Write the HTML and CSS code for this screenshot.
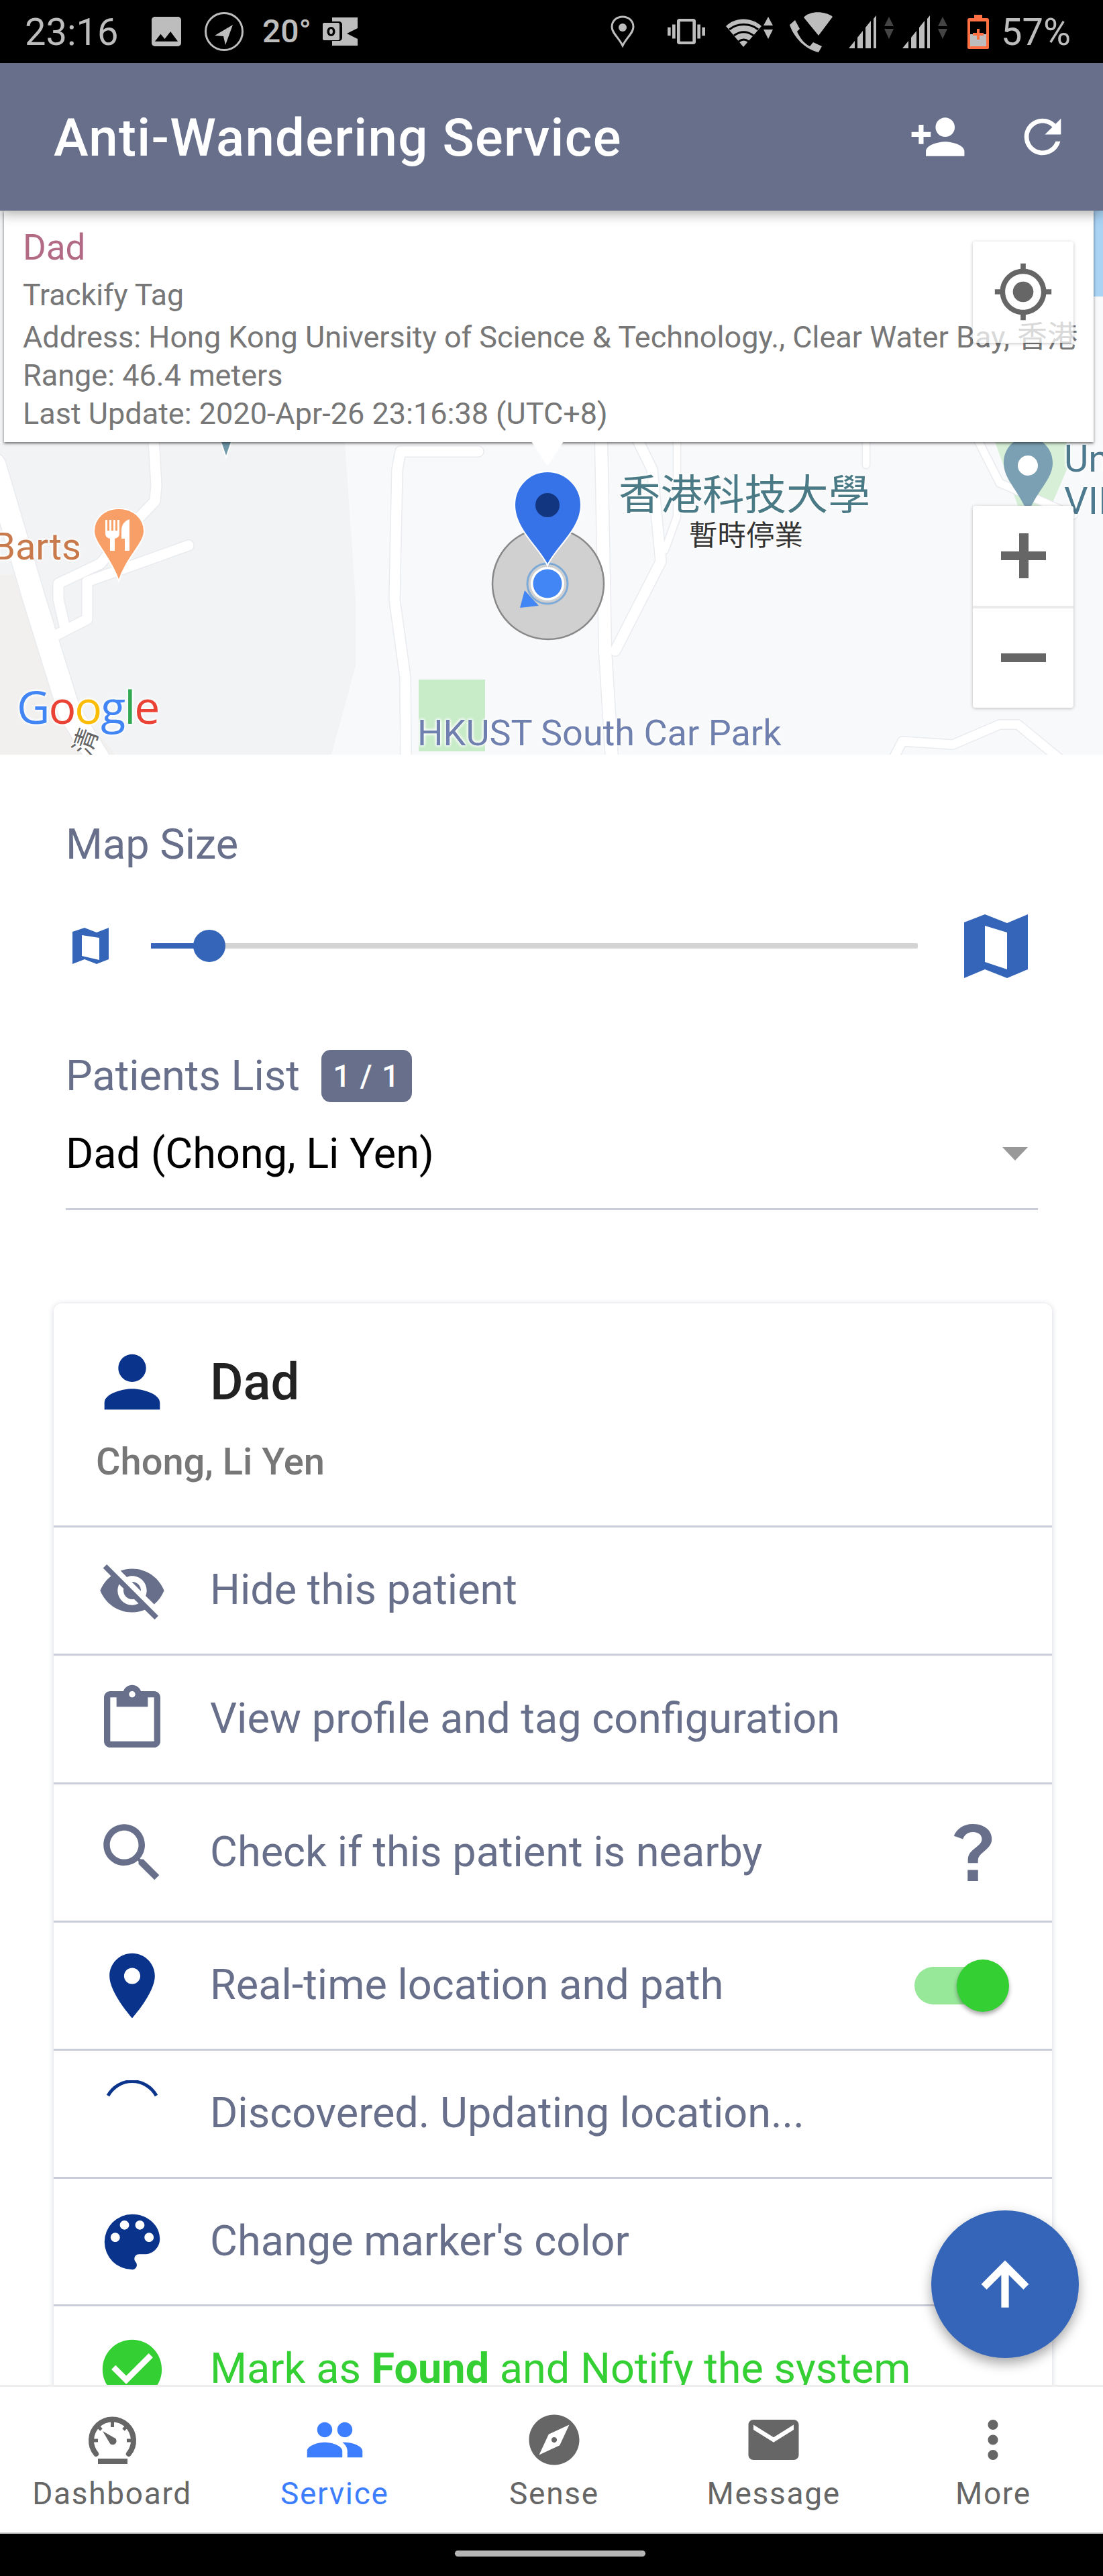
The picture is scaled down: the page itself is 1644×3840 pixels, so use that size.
FILE: index.html
```html
<!DOCTYPE html>
<html lang="en">
<head>
<meta charset="utf-8">
<title>Anti-Wandering Service</title>
<link rel="stylesheet" href="styles.css">
</head>
<body>
<div class="phone">
  <div class="status">
    <div class="status-group">
      <span class="st-time">23:16</span>
      <svg class="si si-image" viewBox="3 3 18 18"><path d="M21 19V5c0-1.1-.9-2-2-2H5c-1.1 0-2 .9-2 2v14c0 1.1.9 2 2 2h14c1.1 0 2-.9 2-2zM8.5 13.5l2.5 3.01L14.5 12l4.5 6H5l3.5-4.5z"/></svg>
      <svg class="si si-nav" viewBox="0 0 60 60"><circle cx="30" cy="30" r="27.5" fill="none" stroke="#bdbdbd" stroke-width="3"/><path d="M43 20 L16 36 L29 37 L32 50 Z"/></svg>
      <span class="st-temp">20°</span>
      <svg class="si si-mail" viewBox="0 0 55 42"><path d="M14 0h38v16L36 24l16 8v10H14v-7h10c3 0 5-2 5-5V11c0-3-2-5-5-5H14z"/><path fill-rule="evenodd" d="M2 8h21c1 0 2 1 2 2v22c0 1-1 2-2 2H2c-1 0-2-1-2-2V10c0-1 1-2 2-2zm10.500 6c-3.500 0-6 3-6 7s2.500 7 6 7 6-3 6-7-2.500-7-6-7zm0 3c1.500 0 2.500 1.700 2.500 4s-1 4-2.500 4-2.500-1.700-2.500-4 1-4 2.500-4z"/></svg>
    </div>
    <div class="status-group">
      <svg class="si si-loc" viewBox="0 0 36 48"><path fill="none" stroke="#bdbdbd" stroke-width="3" d="M18 45 C12 33 2 26 2 17 C2 8 9 2 18 2 C27 2 34 8 34 17 C34 26 24 33 18 45Z"/><circle cx="18" cy="18" r="6"/></svg>
      <svg class="si si-vib" viewBox="0 2 24 20" preserveAspectRatio="none"><path d="M0 15h2V9H0v6zm3 2h2V7H3v10zm19-8v6h2V9h-2zm-3 8h2V7h-2v10zM16.500 3h-9C6.670 3 6 3.670 6 4.500v15c0 .83.67 1.500 1.500 1.500h9c.83 0 1.500-.67 1.500-1.500v-15c0-.83-.67-1.500-1.500-1.500zM16 19H8V5h8v14z"/></svg>
      <svg class="si si-wifi" viewBox="0 0 70 45"><path d="M26 45 L0 14 C14 0 38 0 53 14 Z" /><path fill="none" stroke="#000" stroke-width="3" d="M5 19 C17 9 36 9 48 19 M12 28 C21 21 32 21 41 28 M19 37 C24 33 29 33 34 37"/><path d="M63 0 L70 13 H56Z M56 19 H70 L63 33Z"/></svg>
      <svg class="si si-call" viewBox="0 0 64 62"><path d="M21 10 C30 0 52 0 64 9 L43 37Z"/><path d="M8 14 L15 27 L11 31 C14 38 21 49 30 53 L35 47 L48 53 L43 62 C24 58 6 40 0 21Z"/></svg>
      <svg class="si si-sig" viewBox="0 0 67 49"><path d="M0 49 L9 38 V49Z M13 33 L21 23 V49 H13Z M25 18 L33 8 V49 H25Z M37 5 L41 0 V49 H37Z"/><path class="dim" d="M60 2 L67 16 H53Z M53 20 H67 L60 35Z"/></svg>
      <svg class="si si-sig si-sig2" viewBox="0 0 67 49"><path d="M0 49 L9 38 V49Z M13 33 L21 23 V49 H13Z M25 18 L33 8 V49 H25Z M37 5 L41 0 V49 H37Z"/><path class="dim" d="M60 2 L67 16 H53Z M53 20 H67 L60 35Z"/></svg>
      <svg class="si si-bat" viewBox="0 0 32 51"><path fill="#ff7043" d="M10 0h12v5h7c2 0 3 1 3 3v41c0 1-1 2-2 2H2c-1 0-2-1-2-2V8c0-2 1-3 3-3h7z"/><rect x="4" y="10" width="24" height="37" fill="#000"/><rect x="4" y="29" width="24" height="18" fill="#bdbdbd"/><path fill="#ff7043" d="M14 21h4v6h6v4h-6v6h-4v-6H8v-4h6z"/></svg>
      <span class="st-batt">57%</span>
    </div>
  </div>

  <header class="appbar">
    <h1 class="appbar-title">Anti-Wandering Service</h1>
    <div class="appbar-actions">
      <svg class="ab-add" viewBox="0 0 24 24"><path d="M15 12c2.210 0 4-1.790 4-4s-1.790-4-4-4-4 1.790-4 4 1.790 4 4 4zm-9-2V7H4v3H1v2h3v3h2v-3h3v-2H6zm9 4c-2.670 0-8 1.340-8 4v2h16v-2c0-2.660-5.330-4-8-4z"/></svg>
      <svg class="ab-ref" viewBox="0 0 24 24"><path d="M17.650 6.350C16.200 4.900 14.210 4 12 4c-4.420 0-7.990 3.580-7.990 8s3.570 8 7.990 8c3.730 0 6.840-2.550 7.730-6h-2.080c-.82 2.330-3.040 4-5.650 4-3.310 0-6-2.690-6-6s2.690-6 6-6c1.660 0 3.140.69 4.220 1.780L13 11h7V4l-2.350 2.350z"/></svg>
    </div>
  </header>

  <main class="main">
    <section class="map">
      <svg class="map-base" viewBox="0 314 1644 811">
        <rect x="0" y="314" width="1644" height="811" fill="#f8f9fb"/>
        <path d="M0 314H505L514 660L530 893L530 993L494 1125H0Z" fill="#f1f3f4"/>
        <path d="M0 857H40L70 893L120 1060L172 1125H0Z" fill="#f1f0ee"/>
        <path d="M1630 314h14v128h-14Z" fill="#a9d2f3"/>
        <path d="M1480 650L1590 650L1590 700L1560 770L1530 790Z" fill="#d6efd6"/>
        <g fill="none" stroke="#e9ebee" stroke-linecap="round" stroke-linejoin="round">
          <path stroke-width="36" d="M-8 693L51 893L103 1060L146 1130"/>
          <path stroke-width="18" d="M229 655L233 723L231 747L206 773L150 840L87 870L87 893L97 937"/>
          <path stroke-width="18" d="M281 813L130 867L130 923L83 947"/>
          <path stroke-width="18" d="M713 673H597L592 700L588 893L604 1010L605 1130"/>
          <path stroke-width="21" d="M896 655L902 970L912 1130"/>
          <path stroke-width="18" d="M950 655L972 700L985 837L917 970"/>
          <path stroke-width="13" d="M1009 655L1009 770L991 820"/>
          <path stroke-width="13" d="M1291 655L1291 693"/>
          <path stroke-width="16" d="M1332 1130L1345 1105L1420 1110L1490 1080L1517 1080L1578 1130"/>
          <path stroke-width="14" d="M1457 655L1490 720L1600 768"/>
        </g>
        <g fill="none" stroke="#fff" stroke-linecap="round" stroke-linejoin="round">
          <path stroke-width="33" d="M-8 693L51 893L103 1060L146 1130"/>
          <path stroke-width="15" d="M229 655L233 723L231 747L206 773L150 840L87 870L87 893L97 937"/>
          <path stroke-width="15" d="M281 813L130 867L130 923L83 947"/>
          <path stroke-width="15" d="M713 673H597L592 700L588 893L604 1010L605 1130"/>
          <path stroke-width="18" d="M896 655L902 970L912 1130"/>
          <path stroke-width="15" d="M950 655L972 700L985 837L917 970"/>
          <path stroke-width="10" d="M1009 655L1009 770L991 820"/>
          <path stroke-width="10" d="M1291 655L1291 693"/>
          <path stroke-width="13" d="M1332 1130L1345 1105L1420 1110L1490 1080L1517 1080L1578 1130"/>
          <path stroke-width="11" d="M1457 655L1490 720L1600 768"/>
        </g>
        <rect x="624" y="1013" width="99" height="107" fill="#c8ecc8"/>
        <path d="M326 650h22l-11 32Z" fill="#6e97a8" stroke="#fff" stroke-width="2"/>
        <path d="M1532 766C1518 730 1496 715 1496 690C1496 668 1512 652 1532 652C1552 652 1569 668 1569 690C1569 715 1546 730 1532 766Z" fill="#7ba0b3"/>
        <circle cx="1532" cy="694" r="15" fill="#fff"/>
        <path d="M177 866C165 830 140 810 140 792C140 772 156 758 177 758C198 758 215 772 215 792C215 810 189 830 177 866Z" fill="#f89f68" stroke="#fff" stroke-width="2"/>
        <path d="M157 775v20c0 5 3 7 7 8v18h7v-18c4-1 7-3 7-8v-20h-3v16h-3v-16h-3v16h-3v-16h-3v16h-3v-16Z M193 774v47h-7v-18h-5v-12c0-9 5-15 12-17Z" fill="#fff"/>
        <circle cx="817" cy="870" r="83" fill="#d0d0d0" stroke="#888" stroke-width="2.500"/>
        <path d="M782 880L775 906L803 903Z" fill="#4285f4"/>
        <circle cx="816" cy="870" r="30" fill="none" stroke="#7eaad8" stroke-width="3"/>
        <circle cx="816" cy="870" r="25" fill="#fff"/>
        <circle cx="816" cy="870" r="21.500" fill="#4285f4"/>
        <path d="M816 843C806 818 767 790 767 753C767 725 789 703 816 703C843 703 866 725 866 753C866 790 826 818 816 843Z" fill="#3673e8" stroke="#fff" stroke-width="2"/>
        <circle cx="816" cy="753" r="18" fill="#12367f"/>
      </svg>

      <span class="lbl lbl-hk">香港科技大學</span>
      <span class="lbl lbl-closed">暫時停業</span>
      <span class="lbl lbl-barts">Barts</span>
      <span class="lbl lbl-un">Un</span>
      <span class="lbl lbl-vii">VII</span>
      <span class="lbl lbl-park">HKUST South Car Park</span>
      <span class="lbl lbl-road">清</span>
      <span class="lbl lbl-google"><span class="g-b">G</span><span class="g-r">o</span><span class="g-y">o</span><span class="g-b">g</span><span class="g-g">l</span><span class="g-r">e</span></span>

      <div class="info">
        <div class="info-name">Dad</div>
        <div class="info-tag">Trackify Tag</div>
        <div class="info-line info-addr">Address: Hong Kong University of Science &amp; Technology., Clear Water Bay, 香港</div>
        <div class="info-line">Range: 46.4 meters</div>
        <div class="info-line">Last Update: 2020-Apr-26 23:16:38 (UTC+8)</div>
        <span class="info-tip"></span>
      </div>

      <div class="map-btn locate">
        <svg viewBox="0 0 24 24"><path d="M12 8c-2.210 0-4 1.790-4 4s1.790 4 4 4 4-1.790 4-4-1.790-4-4-4zm8.940 3c-.46-4.170-3.770-7.480-7.940-7.940V1h-2v2.060C6.830 3.520 3.520 6.830 3.060 11H1v2h2.060c.46 4.170 3.770 7.480 7.940 7.940V23h2v-2.060c4.170-.46 7.480-3.770 7.940-7.940H23v-2h-2.060zM12 19c-3.870 0-7-3.130-7-7s3.130-7 7-7 7 3.130 7 7-3.130 7-7 7z"/></svg>
      </div>
      <div class="map-btn zoomer">
        <div class="zoom-cell"><svg viewBox="0 0 67 67"><path d="M27 0h14v27h26v13H41v27H27V40H0V27h27z"/></svg></div>
        <div class="zoom-cell zoom-minus"><svg viewBox="0 0 67 13"><rect width="67" height="13"/></svg></div>
      </div>
    </section>

    <section class="controls">
      <div class="ctl-label">Map Size</div>
      <div class="slider-row">
        <svg class="map-small" viewBox="0 0 54 54"><path fill-rule="evenodd" d="M0 6L18 0L36 7L54 0V47L36 54L18 47L0 54ZM14 11V42L40 48V15Z"/></svg>
        <div class="slider">
          <span class="slider-fill"></span>
          <span class="slider-thumb"></span>
        </div>
        <svg class="map-large" viewBox="0 0 95 95"><path fill-rule="evenodd" d="M0 12L31 0L64 13L95 0V82L64 95L31 82L0 95ZM31 17V71L64 82V27Z"/></svg>
      </div>
      <div class="list-row">
        <span class="ctl-label">Patients List</span>
        <span class="badge">1 / 1</span>
      </div>
      <div class="select">
        <span>Dad (Chong, Li Yen)</span>
        <span class="caret"></span>
      </div>
    </section>

    <section class="card">
      <div class="card-head">
        <div class="head-top">
          <svg class="ic-person" viewBox="0 0 24 24"><path d="M12 12c2.210 0 4-1.790 4-4s-1.790-4-4-4-4 1.790-4 4 1.790 4 4 4zm0 2c-2.670 0-8 1.340-8 4v2h16v-2c0-2.660-5.330-4-8-4z"/></svg>
          <span class="head-name">Dad</span>
        </div>
        <div class="head-sub">Chong, Li Yen</div>
      </div>

      <div class="row">
        <span class="row-ic"><svg class="ic-eye" viewBox="0 0 24 24"><path d="M12 7c2.760 0 5 2.240 5 5 0 .65-.13 1.260-.36 1.830l2.920 2.920c1.510-1.260 2.700-2.890 3.430-4.750-1.730-4.390-6-7.500-11-7.500-1.400 0-2.740.25-3.980.7l2.160 2.160C10.740 7.130 11.350 7 12 7zM2 4.270l2.280 2.280.46.46C3.080 8.300 1.780 10.020 1 12c1.730 4.390 6 7.500 11 7.500 1.550 0 3.030-.3 4.380-.84l.42.42L19.730 22 21 20.730 3.270 3 2 4.270zM7.530 9.800l1.550 1.550c-.05.21-.08.43-.08.65 0 1.660 1.340 3 3 3 .22 0 .44-.03.65-.08l1.550 1.550c-.67.33-1.410.53-2.200.53-2.760 0-5-2.240-5-5 0-.79.2-1.530.53-2.200zm4.310-.78l3.150 3.150.02-.16c0-1.660-1.340-3-3-3l-.17.01z"/></svg></span>
        <span class="row-text">Hide this patient</span>
      </div>
      <div class="row row-b">
        <span class="row-ic"><svg class="ic-clip" viewBox="0 0 24 24"><path d="M19 3h-4.180C14.400 1.840 13.300 1 12 1s-2.400.84-2.820 2H5c-1.100 0-2 .9-2 2v14c0 1.100.9 2 2 2h14c1.100 0 2-.9 2-2V5c0-1.100-.9-2-2-2zm-7 0c.55 0 1 .45 1 1s-.45 1-1 1-1-.45-1-1 .45-1 1-1zm7 16H5V5h2v3h10V5h2v14z"/></svg></span>
        <span class="row-text">View profile and tag configuration</span>
      </div>
      <div class="row row-tall">
        <span class="row-ic"><svg class="ic-search" viewBox="0 0 24 24"><path d="M15.500 14h-.79l-.28-.27C15.410 12.590 16 11.110 16 9.500 16 5.910 13.090 3 9.500 3S3 5.910 3 9.500 5.910 16 9.500 16c1.610 0 3.090-.59 4.230-1.570l.27.28v.79l5 4.990L20.490 19l-4.990-5zm-6 0C7.010 14 5 11.990 5 9.500S7.010 5 9.500 5 14 7.010 14 9.500 11.990 14 9.500 14z"/></svg></span>
        <span class="row-text">Check if this patient is nearby</span>
        <svg class="ic-help" viewBox="6 3 12 19" preserveAspectRatio="none"><path d="M11.070 12.850c.77-1.390 2.250-2.210 3.110-3.440.91-1.290.4-3.700-2.180-3.700-1.690 0-2.520 1.280-2.870 2.340L6.540 6.960C7.250 4.830 9.180 3 11.990 3c2.350 0 3.960 1.070 4.780 2.410.7 1.150 1.110 3.300.03 4.900-1.200 1.770-2.350 2.310-2.970 3.450-.25.46-.35.76-.35 2.240h-2.890c-.01-.78-.13-2.050.48-3.150zM10.500 18.300h3V22h-3z"/></svg>
      </div>
      <div class="row">
        <span class="row-ic"><svg class="ic-pin" viewBox="0 0 24 24"><path d="M12 2C8.130 2 5 5.130 5 9c0 5.250 7 13 7 13s7-7.750 7-13c0-3.870-3.130-7-7-7zm0 9.500c-1.380 0-2.500-1.120-2.500-2.500s1.120-2.500 2.500-2.500 2.500 1.120 2.500 2.500-1.120 2.500-2.500 2.500z"/></svg></span>
        <span class="row-text">Real-time location and path</span>
        <span class="switch"><span class="switch-thumb"></span></span>
      </div>
      <div class="row">
        <span class="row-ic"><svg class="ic-arc" viewBox="0 0 100 100"><path d="M14 23A41 41 0 0 1 86 23"/></svg></span>
        <span class="row-text">Discovered. Updating location...</span>
      </div>
      <div class="row row-s">
        <span class="row-ic"><svg class="ic-pal" viewBox="0 0 24 24"><path d="M12 3a9 9 0 0 0 0 18c.83 0 1.500-.67 1.500-1.500 0-.39-.15-.74-.39-1.010-.23-.26-.38-.61-.38-.99 0-.83.67-1.500 1.500-1.500H16c2.760 0 5-2.240 5-5 0-4.420-4.030-8-9-8zm-5.500 9c-.83 0-1.500-.67-1.500-1.500S5.670 9 6.500 9 8 9.670 8 10.500 7.330 12 6.500 12zm3-4C8.670 8 8 7.330 8 6.500S8.670 5 9.500 5s1.500.67 1.500 1.500S10.330 8 9.500 8zm5 0c-.83 0-1.500-.67-1.500-1.500S13.670 5 14.500 5s1.500.67 1.500 1.500S15.330 8 14.500 8zm3 4c-.83 0-1.500-.67-1.500-1.500S16.670 9 17.500 9s1.500.67 1.500 1.500-.67 1.500-1.500 1.500z"/></svg></span>
        <span class="row-text">Change marker's color</span>
      </div>
      <div class="row row-found">
        <span class="row-ic"><svg class="ic-check" viewBox="0 0 24 24"><path d="M12 2C6.480 2 2 6.480 2 12s4.480 10 10 10 10-4.480 10-10S17.520 2 12 2zm-2 15l-5-5 1.410-1.410L10 14.170l7.590-7.590L19 8l-9 9z"/></svg></span>
        <span class="row-text">Mark as <b>Found</b> and Notify the system</span>
      </div>
    </section>
  </main>

  <button class="fab" aria-label="Scroll to top"><svg viewBox="0 0 24 24"><path d="M4 12l1.410 1.410L11 7.830V20h2V7.830l5.580 5.590L20 12l-8-8-8 8z"/></svg></button>

  <nav class="tabs">
    <div class="tab tab-first">
      <svg class="tab-ic" viewBox="0 0 90 90"><path d="M21.200 66A31.500 31.500 0 1 1 69.800 66" fill="none" stroke="#666" stroke-width="8" stroke-linecap="round"/><path d="M45.500 14v12M14 46h10M77 46H67M23 24l6 6M68 24l-6 6" fill="none" stroke="#666" stroke-width="5"/><path d="M31 32L47.500 41.500A5.500 5.500 0 1 1 41 49Z" fill="#666"/><rect x="24" y="73" width="44" height="8" fill="#666"/></svg>
      <span>Dashboard</span>
    </div>
    <div class="tab tab-on">
      <svg class="tab-ic" viewBox="0 0 24 24"><path d="M16 11c1.660 0 2.990-1.340 2.990-3S17.660 5 16 5c-1.660 0-3 1.340-3 3s1.340 3 3 3zm-8 0c1.660 0 2.990-1.340 2.990-3S9.660 5 8 5C6.340 5 5 6.340 5 8s1.340 3 3 3zm0 2c-2.330 0-7 1.170-7 3.500V19h14v-2.500c0-2.330-4.670-3.500-7-3.500zm8 0c-.29 0-.62.02-.97.05 1.160.84 1.970 1.970 1.970 3.450V19h6v-2.500c0-2.330-4.670-3.500-7-3.500z"/></svg>
      <span>Service</span>
    </div>
    <div class="tab">
      <svg class="tab-ic" viewBox="0 0 24 24"><path d="M12 10.900c-.61 0-1.100.49-1.100 1.100s.49 1.100 1.100 1.100c.61 0 1.100-.49 1.100-1.100s-.49-1.100-1.100-1.100zM12 2C6.480 2 2 6.480 2 12s4.480 10 10 10 10-4.480 10-10S17.520 2 12 2zm2.190 12.190L6 18l3.810-8.190L18 6l-3.810 8.190z"/></svg>
      <span>Sense</span>
    </div>
    <div class="tab">
      <svg class="tab-ic" viewBox="0 0 24 24"><path d="M20 4H4c-1.100 0-1.990.9-1.990 2L2 18c0 1.100.9 2 2 2h16c1.100 0 2-.9 2-2V6c0-1.100-.9-2-2-2zm0 4l-8 5-8-5V6l8 5 8-5v2z"/></svg>
      <span>Message</span>
    </div>
    <div class="tab">
      <svg class="tab-ic" viewBox="0 0 24 24"><path d="M12 8c1.100 0 2-.9 2-2s-.9-2-2-2-2 .9-2 2 .9 2 2 2zm0 2c-1.100 0-2 .9-2 2s.9 2 2 2 2-.9 2-2-.9-2-2-2zm0 6c-1.100 0-2 .9-2 2s.9 2 2 2 2-.9 2-2-.9-2-2-2z"/></svg>
      <span>More</span>
    </div>
  </nav>

  <div class="homebar"><span class="home-pill"></span></div>
</div>
</body>
</html>
```

FILE: styles.css
```css
* { box-sizing: border-box; }
html, body { margin: 0; padding: 0; background: #000; }
body { font-family: Roboto, "Noto Sans CJK TC", sans-serif; }
.phone { position: relative; width: 1644px; height: 3840px; display: flex; flex-direction: column; overflow: hidden; background: #fff; }

/* status bar */
.status { height: 94px; flex: none; background: #000; display: flex; justify-content: space-between; align-items: center; padding: 0 52px 0 37px; color: #bdbdbd; }
.status-group { display: flex; align-items: center; }
.status svg { fill: #bdbdbd; display: block; flex: none; }
.st-time { font-size: 56px; line-height: 60px; width: 139px; position: relative; top: 1px; }
.st-temp { font-size: 48px; font-weight: 500; line-height: 60px; width: 60px; margin-left: 27px; }
.si-image { width: 44px; height: 44px; margin-left: 50px; }
.si-nav { width: 60px; height: 60px; margin-left: 34px; }
.si-mail { width: 55px; height: 42px; margin-left: 30px; }
.si-loc { width: 36px; height: 48px; }
.si-vib { width: 56px; height: 42px; margin-left: 49px; }
.si-wifi { width: 70px; height: 45px; margin-left: 31px; }
.si-call { width: 64px; height: 62px; margin-left: 25px; }
.si-sig { width: 67px; height: 49px; margin-left: 24px; }
.si-sig2 { margin-left: 13px; }
.si-bat { width: 32px; height: 51px; margin-left: 30px; }
.status .dim { fill: #444; }
.st-batt { font-size: 56px; line-height: 60px; margin-left: 18px; width: 100px; position: relative; top: 1px; white-space: nowrap; }

/* app bar */
.appbar { height: 220px; flex: none; background: #676f8a; display: flex; align-items: center; justify-content: space-between; padding: 0 49px 0 80px; box-shadow: 0 4px 18px rgba(0,0,0,.35); position: relative; z-index: 5; }
.appbar-title { margin: 4px 0 0; color: #fff; font-size: 78px; font-weight: 500; line-height: 90px; white-space: nowrap; letter-spacing: 1.300px; }
.appbar-actions { display: flex; align-items: center; gap: 72px; }
.appbar-actions svg { fill: #fff; display: block; }
.ab-add { width: 86px; height: 86px; }
.ab-ref { width: 82px; height: 82px; }

.main { flex: 1; min-height: 0; overflow: hidden; }

/* map */
.map { position: relative; height: 811px; overflow: hidden; background: #f8f9fb; }
.map-base { position: absolute; inset: 0; width: 1644px; height: 811px; display: block; }
.lbl { position: absolute; white-space: nowrap; text-shadow: 0 0 5px #fff, 0 0 5px #fff, 0 0 5px #fff; line-height: 1; }
.lbl-hk { left: 922px; top: 388px; font-size: 62.500px; color: #4a7a85; font-family: "Noto Sans CJK TC", sans-serif; }
.lbl-closed { left: 1027px; top: 460px; font-size: 42.500px; color: #333; font-family: "Noto Sans CJK TC", sans-serif; }
.lbl-barts { left: -12px; top: 473px; font-size: 56px; color: #c97a4c; }
.lbl-un { left: 1586px; top: 342px; font-size: 56px; color: #4d7a8f; }
.lbl-vii { left: 1586px; top: 405px; font-size: 56px; color: #4d7a8f; }
.lbl-park { left: 622px; top: 752px; font-size: 54px; color: #6f7fae; }
.lbl-road { left: 106px; top: 772px; font-size: 38px; color: #666; transform: rotate(-70deg); font-family: "Noto Sans CJK TC", sans-serif; }
.lbl-google { left: 25px; top: 705px; font-size: 68px; font-weight: 500; font-family: "Open Sans", sans-serif; letter-spacing: -2px; }
.g-b { color: #4285f4; } .g-r { color: #ea4335; } .g-y { color: #fbbc05; } .g-g { color: #34a853; }

.info { position: absolute; left: 6px; top: 0; width: 1624px; height: 345px; background: #fff; padding: 25px 0 0 28px; box-shadow: 0 2px 4px rgba(0,0,0,.55); color: #777; }
.info-name { font-size: 53px; line-height: 60px; color: #b26a85; }
.info-tag { font-size: 44.500px; line-height: 58px; margin-top: 12px; }
.info-line { font-size: 45px; line-height: 57px; white-space: nowrap; }
.info-addr { margin-top: 5px; }
.info-tip { position: absolute; left: 786px; top: 344px; width: 48px; height: 37px; background: #fff; clip-path: polygon(0 0, 100% 0, 50% 100%); }

.map-btn { position: absolute; background: rgba(255,255,255,.72); box-shadow: 0 1px 5px rgba(0,0,0,.25); border-radius: 4px; }
.locate { left: 1450px; top: 46px; width: 150px; height: 151px; display: flex; align-items: center; justify-content: center; padding-bottom: 2px; }
.locate svg { width: 92px; height: 92px; fill: #666; display: block; }
.zoomer { left: 1450px; top: 440px; width: 150px; height: 301px; background: #fff; display: flex; flex-direction: column; }
.zoom-cell { flex: 1; display: flex; align-items: center; justify-content: center; }
.zoom-cell svg { width: 67px; height: 67px; fill: #666; display: block; }
.zoom-minus { border-top: 4px solid #ebebeb; }
.zoom-minus svg { height: 13px; }

/* controls */
.controls { padding: 99px 97px 0 98px; }
.ctl-label { font-size: 63px; line-height: 70px; color: #676f8a; }
.slider-row { height: 100px; margin-top: 66px; display: flex; align-items: center; }
.slider-row svg { fill: #3465b9; display: block; flex: none; }
.map-small { width: 54px; height: 54px; margin-left: 10px; }
.map-large { width: 95px; height: 95px; margin-left: 69px; margin-right: 15px; }
.slider { position: relative; height: 8px; flex: 1; margin-left: 63px; background: #d4d4d4; border-radius: 2px; }
.slider-fill { position: absolute; left: 0; top: 0; height: 100%; width: 87px; background: #3465b9; }
.slider-thumb { position: absolute; left: 63px; top: -20px; width: 48px; height: 48px; border-radius: 50%; background: #3465b9; }
.list-row { display: flex; align-items: center; height: 78px; margin-top: 105px; }
.badge { margin-left: 32px; width: 135px; height: 78px; border-radius: 14px; background: #676f8a; color: #fff; font-size: 46px; font-weight: 500; display: flex; align-items: center; justify-content: center; letter-spacing: 1.500px; white-space: pre; }
.select { height: 161px; padding-top: 47px; display: flex; justify-content: space-between; border-bottom: 3px solid #c9ccd9; font-size: 63px; line-height: 60px; color: #000; }
.caret { width: 0; height: 0; margin: 20px 15px 0 0; border-left: 19px solid transparent; border-right: 19px solid transparent; border-top: 20px solid #999; }

/* card */
.card { margin: 139px 76px 0 80px; background: #fff; border-radius: 12px 12px 0 0; box-shadow: 0 1px 8px rgba(40,50,90,.2); }
.card-head { height: 331px; padding: 55px 0 0 55px; }
.head-top { display: flex; align-items: center; height: 124px; }
.ic-person { width: 124px; height: 124px; fill: #0a348c; display: block; flex: none; }
.head-name { margin-left: 54px; font-size: 76px; font-weight: 500; color: #222; line-height: 90px; }
.head-sub { margin: 27px 0 0 8px; font-size: 56px; font-weight: 500; line-height: 60px; color: #777; }
.row { height: 191px; border-top: 3px solid #c9ccd9; display: flex; align-items: center; font-size: 63px; color: #676f8a; padding-right: 86px; }
.row-b { height: 192px; }
.row-tall { height: 206px; }
.row-s { height: 190px; }
.row-ic { width: 233px; flex: none; display: flex; align-items: center; justify-content: center; }
.row-ic svg { display: block; fill: #676f8a; }
.row-text { flex: 1; white-space: nowrap; margin-top: -3px; }
.ic-eye { width: 104px; height: 104px; }
.ic-clip { width: 112px; height: 112px; }
.ic-search { width: 114px; height: 114px; }
.row-ic .ic-pin { width: 116px; height: 116px; fill: #0a348c; }
.row-ic .ic-arc { width: 100px; height: 100px; fill: none; stroke: #0a348c; stroke-width: 5; }
.row-ic .ic-pal { width: 110px; height: 110px; fill: #0a348c; }
.row-ic .ic-check { width: 106px; height: 106px; fill: #33cf33; }
.ic-help { width: 62px; height: 85px; fill: #676f8a; display: block; flex: none; margin-right: 1px; }
.switch { position: relative; width: 87px; height: 56px; flex: none; background: #98e89a; border-radius: 28px 0 0 28px; margin-right: 32px; }
.switch-thumb { position: absolute; left: 63px; top: -11px; width: 78px; height: 78px; border-radius: 50%; background: #33cf33; box-shadow: 0 4px 6px rgba(0,0,0,.35); }
.row-found { color: #33cf33; }
.row-found b { font-weight: 700; }

/* fab */
.fab { position: absolute; left: 1388px; top: 3295px; width: 220px; height: 220px; border: 0; padding: 0; border-radius: 50%; background: #3465b9; box-shadow: 0 8px 18px rgba(0,0,0,.35); display: flex; align-items: center; justify-content: center; z-index: 4; }
.fab svg { width: 100px; height: 100px; fill: #fff; stroke: #fff; stroke-width: .7; display: block; }

/* bottom nav */
.tabs { height: 222px; flex: none; display: grid; grid-template-columns: repeat(5, 1fr); padding: 34px 0 0 8px; background: #fff; border-top: 3px solid #eee; border-bottom: 2px solid #ccc; position: relative; z-index: 3; }
.tab { display: flex; flex-direction: column; align-items: center; color: #666; font-size: 46px; letter-spacing: 1.700px; line-height: 50px; }
.tab-first { margin-right: 9px; }
.tab-ic { width: 90px; height: 90px; fill: #666; display: block; margin-bottom: 10px; }
.tab-on { color: #3d7eff; }
.tab-on .tab-ic { fill: #3d7eff; }

.homebar { height: 63px; flex: none; background: #000; display: flex; justify-content: center; padding-top: 25px; }
.home-pill { width: 284px; height: 9px; border-radius: 5px; background: #b5b5b5; margin-left: -4px; }
```
